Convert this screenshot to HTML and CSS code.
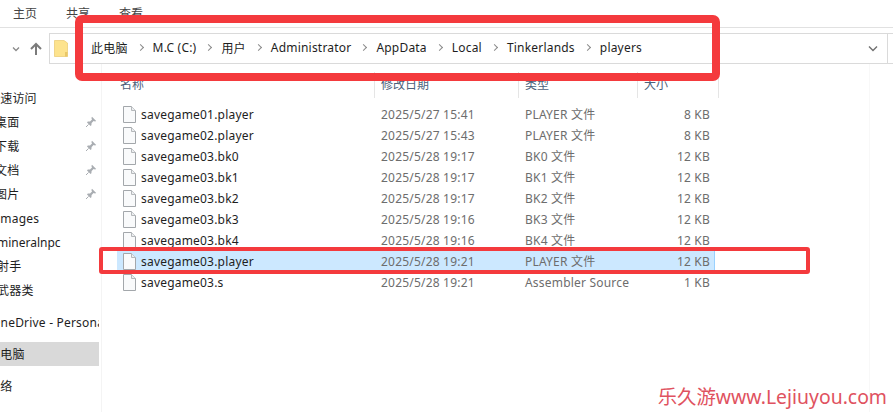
FILE: index.html
```html
<!DOCTYPE html>
<html lang="zh">
<head>
<meta charset="utf-8">
<title>players</title>
<link rel="stylesheet" href="styles.css">
</head>
<body>
<svg class="defs" width="0" height="0" aria-hidden="true">
  <symbol id="doc" viewBox="0 0 13 17">
    <path d="M.5 .5H8.5L12.5 4.5V16.5H.5Z" fill="#f9fafb" stroke="#a3a7ab"/>
    <path d="M8.5 .5V4.5H12.5" fill="#eceef0" stroke="#b5b8bb"/>
  </symbol>
  <symbol id="pin" viewBox="0 0 12 12">
    <path d="M7 .8L11.2 5L10 5.6L8.6 5L6.6 7L6.4 9.2L5.6 10L2 6.4L2.8 5.6L5 5.4L7 3.4L6.4 2Z" fill="#a9adb2"/>
    <path d="M3.6 8.4L1 11" stroke="#a9adb2" fill="none"/>
  </symbol>
</svg>

<nav class="ribbon">
  <span class="tab">主页</span>
  <span class="tab">共享</span>
  <span class="tab">查看</span>
</nav>

<div class="toolbar">
  <svg class="nav-chevron" width="8" height="6" viewBox="0 0 8 6"><path d="M1 1.5L4 4.5L7 1.5" fill="none" stroke="#8a8a8a" stroke-width="1.3"/></svg>
  <svg class="nav-up" width="14" height="14" viewBox="0 0 14 14"><path d="M7 13V2M2 7L7 2L12 7" fill="none" stroke="#7b7b7b" stroke-width="2"/></svg>
  <div class="address">
    <svg class="folder" width="14" height="17" viewBox="0 0 14 17"><path d="M.5 .5H10L13.5 3V16.5H.5Z" fill="#fde38d" stroke="#e6c25f" stroke-width=".6"/><path d="M11 12H13.5V16.5H11Z" fill="#e9c768"/></svg>
    <div class="crumbs">
      <span>此电脑</span><i class="sep"></i>
      <span>M.C (C:)</span><i class="sep"></i>
      <span>用户</span><i class="sep"></i>
      <span>Administrator</span><i class="sep"></i>
      <span>AppData</span><i class="sep"></i>
      <span>Local</span><i class="sep"></i>
      <span>Tinkerlands</span><i class="sep"></i>
      <span>players</span>
    </div>
    <svg class="addr-chevron" width="10" height="7" viewBox="0 0 10 7"><path d="M1 1.5L5 5.5L9 1.5" fill="none" stroke="#707070" stroke-width="1.4"/></svg>
    <div class="search"></div>
  </div>
</div>

<main class="main">
  <aside class="sidebar">
    <div class="group">
      <div class="item"><span class="label lvl0">快速访问</span></div>
      <div class="item"><span class="label lvl1">桌面</span><svg class="pin"><use href="#pin"/></svg></div>
      <div class="item"><span class="label lvl1">下载</span><svg class="pin"><use href="#pin"/></svg></div>
      <div class="item"><span class="label lvl1">文档</span><svg class="pin"><use href="#pin"/></svg></div>
      <div class="item"><span class="label lvl1">图片</span><svg class="pin"><use href="#pin"/></svg></div>
      <div class="item"><span class="label lvl2">images</span></div>
      <div class="item"><span class="label lvl2 tight">mineralnpc</span></div>
      <div class="item"><span class="label lvl2">射手</span></div>
      <div class="item"><span class="label lvl2">武器类</span></div>
    </div>
    <div class="item"><span class="label lvl3">OneDrive - Personal</span></div>
    <div class="item active"><span class="label lvl0">此电脑</span></div>
    <div class="item"><span class="label lvl0">网络</span></div>
  </aside>

  <section class="list">
    <div class="head">
      <div class="col">名称</div>
      <div class="col">修改日期</div>
      <div class="col">类型</div>
      <div class="col">大小</div>
    </div>
    <div class="rows">
      <div class="row"><span class="name"><svg class="doc"><use href="#doc"/></svg>savegame01.player</span><span>2025/5/27 15:41</span><span>PLAYER 文件</span><span class="size">8 KB</span></div>
      <div class="row"><span class="name"><svg class="doc"><use href="#doc"/></svg>savegame02.player</span><span>2025/5/27 15:43</span><span>PLAYER 文件</span><span class="size">8 KB</span></div>
      <div class="row"><span class="name"><svg class="doc"><use href="#doc"/></svg>savegame03.bk0</span><span>2025/5/28 19:17</span><span>BK0 文件</span><span class="size">12 KB</span></div>
      <div class="row"><span class="name"><svg class="doc"><use href="#doc"/></svg>savegame03.bk1</span><span>2025/5/28 19:17</span><span>BK1 文件</span><span class="size">12 KB</span></div>
      <div class="row"><span class="name"><svg class="doc"><use href="#doc"/></svg>savegame03.bk2</span><span>2025/5/28 19:17</span><span>BK2 文件</span><span class="size">12 KB</span></div>
      <div class="row"><span class="name"><svg class="doc"><use href="#doc"/></svg>savegame03.bk3</span><span>2025/5/28 19:16</span><span>BK3 文件</span><span class="size">12 KB</span></div>
      <div class="row"><span class="name"><svg class="doc"><use href="#doc"/></svg>savegame03.bk4</span><span>2025/5/28 19:16</span><span>BK4 文件</span><span class="size">12 KB</span></div>
      <div class="row selected"><span class="name"><svg class="doc"><use href="#doc"/></svg>savegame03.player</span><span>2025/5/28 19:21</span><span>PLAYER 文件</span><span class="size">12 KB</span></div>
      <div class="row"><span class="name"><svg class="doc"><use href="#doc"/></svg>savegame03.s</span><span>2025/5/28 19:21</span><span>Assembler Source</span><span class="size">1 KB</span></div>
    </div>
  </section>
</main>

<div class="mark mark-address"></div>
<div class="mark mark-row"></div>
<div class="watermark">乐久游www.Lejiuyou.com</div>
</body>
</html>
```
FILE: styles.css
```css
* { box-sizing: border-box; }
html, body { margin: 0; padding: 0; }
body {
  position: relative;
  width: 893px;
  height: 412px;
  overflow: hidden;
  background: #fff;
  color: #1e1e1e;
  font-family: "Noto Sans", "Noto Sans CJK SC", sans-serif;
  font-size: 12px;
  letter-spacing: .2px;
}
.defs { position: absolute; }

.ribbon {
  display: flex;
  gap: 29px;
  height: 28px;
  padding: 5px 0 0 13px;
  border-bottom: 1px solid #e1e1e1;
  line-height: 17px;
  color: #444;
  letter-spacing: 0;
}

.toolbar {
  display: flex;
  align-items: center;
  height: 31px;
  margin-top: 5px;
}
.nav-chevron { margin-left: 12px; }
.nav-up { margin-left: 9px; }
.address {
  display: flex;
  align-items: center;
  flex: 1;
  height: 31px;
  margin-left: 6px;
  padding-left: 4px;
  border: 1px solid #dadada;
  border-right: 0;
}
.crumbs {
  display: flex;
  align-items: center;
  flex: 1;
  margin-left: 23px;
  padding-bottom: 2px;
}
.sep {
  display: block;
  width: 5px;
  height: 5px;
  margin: 0 10px;
  border-top: 1.4px solid #8a8a8a;
  border-right: 1.4px solid #8a8a8a;
  transform: rotate(45deg);
}
.addr-chevron { margin-right: 9px; }
.search {
  width: 6px;
  height: 29px;
  border-left: 1px solid #dadada;
}

.main { display: flex; }
.sidebar {
  display: flex;
  flex-direction: column;
  gap: 8px;
  width: 102px;
  height: 348px;
  padding: 22px 2px 0 0;
  border-right: 1px solid #f4f4f4;
}
.item {
  display: flex;
  align-items: center;
  height: 24px;
  overflow: hidden;
  white-space: nowrap;
}
.item.active { background: #d9d9d9; }
.label { flex: 1; min-width: 0; }
.lvl0 { margin-left: -12px; }
.lvl1 { margin-left: -5px; }
.lvl2 { margin-left: -3px; }
.lvl3 { flex: none; margin-left: -9px; }
.tight { letter-spacing: 0; }
.pin { flex: none; width: 12px; height: 12px; margin-right: 3px; transform: translateX(1px); }

.list {
  flex: 1;
  min-width: 0;
  margin-right: 23px;
  border-right: 1px solid #f8f8f8;
}
.head, .row {
  display: grid;
  grid-template-columns: 258px 144px 119px 77px;
  width: 598px;
}
.head {
  width: 602px;
  grid-template-columns: 258px 144px 119px 81px;
  height: 25px;
  margin: 8px 0 0 15px;
  color: #4c607a;
  line-height: 26px;
  letter-spacing: 0;
}
.col {
  padding-left: 6px;
  border-right: 1px solid #e5e5e5;
}
.col:first-child { padding-left: 3px; }
.rows { margin: 7px 0 0 15px; }
.row {
  align-items: center;
  height: 21px;
  color: #6d6d6d;
  line-height: 21px;
  white-space: nowrap;
}
.row > span { padding-left: 6px; }
.row > .name {
  display: flex;
  align-items: center;
  padding-left: 6px;
  color: #1e1e1e;
}
.row > .size { padding: 0 5px 0 0; text-align: right; }
.doc { flex: none; width: 13px; height: 17px; margin-right: 5px; }
.selected {
  background: #cce8ff;
  box-shadow: inset -1px 0 0 #99d1ff;
}

.mark {
  position: absolute;
  border-style: solid;
  border-color: #f43a3d;
}
.mark-address {
  left: 75px;
  top: 15px;
  width: 645px;
  height: 66px;
  border-width: 8px;
  border-radius: 7px;
}
.mark-row {
  left: 99px;
  top: 247px;
  width: 711px;
  height: 27px;
  border-width: 4px;
  border-radius: 3px;
}
.watermark {
  position: absolute;
  right: 6px;
  bottom: 2px;
  color: #df5260;
  font-size: 19.4px;
  letter-spacing: 0;
  line-height: 26px;
  white-space: nowrap;
}
```
